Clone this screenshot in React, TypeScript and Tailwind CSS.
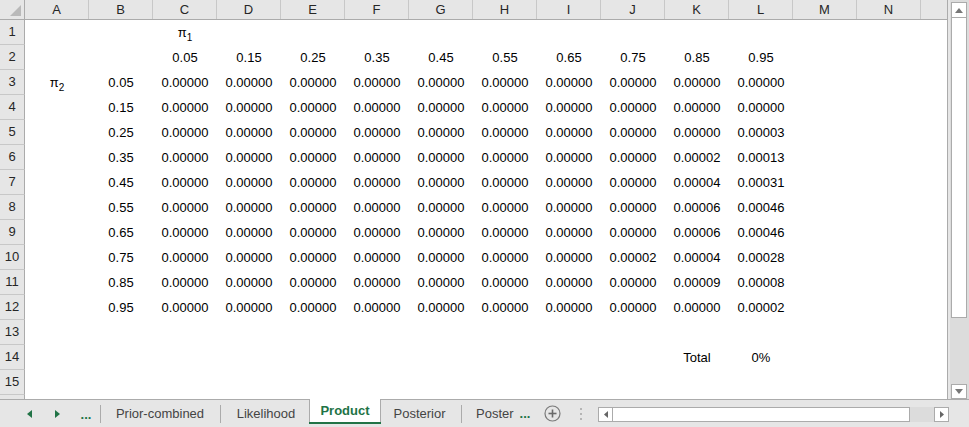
import React from "react";

const COLS = ["A", "B", "C", "D", "E", "F", "G", "H", "I", "J", "K", "L", "M", "N"];
const VALS = ["0.05", "0.15", "0.25", "0.35", "0.45", "0.55", "0.65", "0.75", "0.85", "0.95"];

// key: `${rowIdx}-${colIdx}` where rowIdx 0..9 (pi2), colIdx 0..9 (pi1)
const SPECIAL: Record<string, string> = {
  "2-9": "0.00003",
  "3-8": "0.00002",
  "3-9": "0.00013",
  "4-8": "0.00004",
  "4-9": "0.00031",
  "5-8": "0.00006",
  "5-9": "0.00046",
  "6-8": "0.00006",
  "6-9": "0.00046",
  "7-7": "0.00002",
  "7-8": "0.00004",
  "7-9": "0.00028",
  "8-8": "0.00009",
  "8-9": "0.00008",
  "9-9": "0.00002",
};

function Pi({ n }: { n: string }) {
  return (
    <span className="relative">
      π<span className="relative top-[4px] text-[10px]">{n}</span>
    </span>
  );
}

function cellContent(r: number, c: number): React.ReactNode {
  if (r === 1 && c === 2) return <Pi n="1" />;
  if (r === 2 && c >= 2 && c <= 11) return VALS[c - 2];
  if (r >= 3 && r <= 12) {
    if (r === 3 && c === 0) return <Pi n="2" />;
    if (c === 1) return VALS[r - 3];
    if (c >= 2 && c <= 11) return SPECIAL[`${r - 3}-${c - 2}`] ?? "0.00000";
  }
  if (r === 14 && c === 10) return "Total";
  if (r === 14 && c === 11) return "0%";
  return null;
}

const font = { fontFamily: '"Liberation Sans", Arial, sans-serif' };

function Sheet() {
  const rows = Array.from({ length: 16 }, (_, i) => i + 1);
  return (
    <div className="w-[948px] h-[399px] overflow-hidden border-r border-[#ababab] bg-white flex flex-col">
      {/* column header */}
      <div className="flex h-[20px] shrink-0 bg-[#e6e6e6] border-b border-[#ababab] text-[13px] text-[#262626]">
        <div className="w-[25px] shrink-0 border-r border-[#ababab] flex items-end justify-end pr-[3px] pb-[3px]">
          <svg width="11" height="11" viewBox="0 0 11 11">
            <polygon points="11,0 11,11 0,11" fill="#b9b9b9" />
          </svg>
        </div>
        {COLS.map((l) => (
          <div
            key={l}
            className="w-[64px] shrink-0 border-r border-[#c8c8c8] flex items-center justify-center"
          >
            {l}
          </div>
        ))}
        <div className="flex-1" />
      </div>
      {rows.map((r) => (
        <div key={r} className="flex h-[25px] shrink-0 text-[13px] text-black">
          <div className="w-[25px] shrink-0 bg-[#e6e6e6] border-r border-[#ababab] border-b border-b-[#c8c8c8] flex items-center justify-center text-[#262626]">
            {r <= 15 ? r : null}
          </div>
          {COLS.map((l, c) => (
            <div key={l} className="w-[64px] shrink-0 flex items-center justify-center whitespace-nowrap">
              {cellContent(r, c)}
            </div>
          ))}
          <div className="flex-1" />
        </div>
      ))}
    </div>
  );
}

function VScroll() {
  return (
    <div className="w-[21px] h-[399px] bg-[#e6e6e6] pl-[2px]">
      <div className="w-[19px] h-full bg-[#dcdcdc] flex flex-col pl-[1px] pt-[2px]">
        <div className="w-[16px] h-[16px] bg-white border border-[#ababab] flex items-center justify-center">
          <svg width="8" height="5" viewBox="0 0 8 5">
            <polygon points="0,5 8,5 4,0" fill="#777" />
          </svg>
        </div>
        <div className="w-[16px] h-[300px] bg-white border-x border-b border-[#ababab]" />
        <div className="flex-1" />
        <div className="w-[16px] h-[15px] bg-white border border-[#ababab] flex items-center justify-center">
          <svg width="8" height="5" viewBox="0 0 8 5">
            <polygon points="0,0 8,0 4,5" fill="#777" />
          </svg>
        </div>
      </div>
    </div>
  );
}

function Sep() {
  return (
    <div className="w-[6px] shrink-0 flex justify-center">
      <div className="w-px h-[18px] bg-[#ababab]" />
    </div>
  );
}

function TabBar() {
  return (
    <div className="h-[28px] bg-[#e6e6e6] border-t border-[#ababab] flex items-start text-[13px] text-[#444]">
      <div className="h-[27px] flex items-center">
        <div className="w-[18px]" />
        <div className="w-[22px] flex justify-center">
          <svg width="5" height="8" viewBox="0 0 5 8">
            <polygon points="5,0 5,8 0,4" fill="#217346" />
          </svg>
        </div>
        <div className="w-[6px]" />
        <div className="w-[22px] flex justify-center">
          <svg width="5" height="8" viewBox="0 0 5 8">
            <polygon points="0,0 0,8 5,4" fill="#217346" />
          </svg>
        </div>
        <div className="w-[7px]" />
        <div className="w-[22px] flex justify-center font-bold text-[#217346] leading-none pt-[2px]">...</div>
        <Sep />
        <div className="w-[114px] flex justify-center">Prior-combined</div>
        <Sep />
        <div className="w-[86px] flex justify-center">Likelihood</div>
      </div>
      <div className="w-[72px] h-[25px] -mt-px bg-white border-x border-[#ababab] flex flex-col">
        <div className="flex-1 flex items-center justify-center font-bold text-[#217346] pt-[1px]">Product</div>
        <div className="h-[2px] bg-[#217346] -mx-px" />
      </div>
      <div className="h-[27px] flex items-center">
        <div className="w-[77px] flex justify-center">Posterior</div>
        <Sep />
        <div className="w-[74px] pl-[12px] flex items-center whitespace-nowrap">
          Poster
          <span className="ml-[6px] font-bold text-[#217346]">...</span>
        </div>
        <div className="w-[28px] flex justify-center">
          <svg width="17" height="17" viewBox="0 0 17 17">
            <circle cx="8.5" cy="8.5" r="7.5" fill="none" stroke="#7a7a7a" strokeWidth="1.2" />
            <line x1="8.5" y1="4.5" x2="8.5" y2="12.5" stroke="#6a6a6a" strokeWidth="1.6" />
            <line x1="4.5" y1="8.5" x2="12.5" y2="8.5" stroke="#6a6a6a" strokeWidth="1.6" />
          </svg>
        </div>
        <div className="w-[30px] flex flex-col items-center gap-[3px]">
          <div className="w-[2px] h-[2px] bg-[#b5b5b5]" />
          <div className="w-[2px] h-[2px] bg-[#b5b5b5]" />
          <div className="w-[2px] h-[2px] bg-[#b5b5b5]" />
        </div>
        <div className="w-[2px]" />
        <div className="flex h-[15px] mt-[1px]">
          <div className="w-[15px] h-[15px] bg-white border border-[#ababab] flex items-center justify-center">
            <svg width="4" height="7" viewBox="0 0 4 7">
              <polygon points="4,0 4,7 0,3.5" fill="#666" />
            </svg>
          </div>
          <div className="w-[297px] h-[15px] bg-white border-y border-r border-[#ababab]" />
          <div className="w-[24px] h-[15px] bg-[#dcdcdc]" />
          <div className="w-[15px] h-[15px] bg-white border border-[#ababab] flex items-center justify-center">
            <svg width="4" height="7" viewBox="0 0 4 7">
              <polygon points="0,0 0,7 4,3.5" fill="#666" />
            </svg>
          </div>
        </div>
      </div>
    </div>
  );
}

export default function App() {
  return (
    <div className="w-[969px] h-[427px] overflow-hidden bg-[#e6e6e6]" style={font}>
      <div className="flex">
        <Sheet />
        <VScroll />
      </div>
      <TabBar />
    </div>
  );
}
